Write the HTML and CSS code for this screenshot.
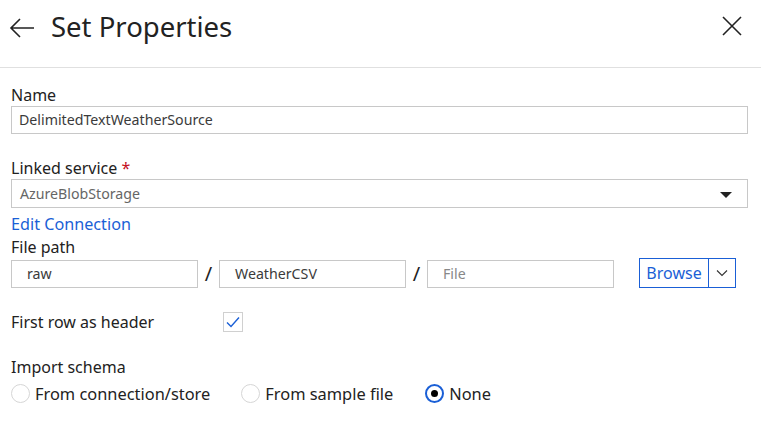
FILE: index.html
```html
<!DOCTYPE html>
<html>
<head>
<meta charset="utf-8">
<link rel="stylesheet" href="styles.css">
</head>
<body>
<div class="panel">
  <header class="head">
    <button class="back" aria-label="Back">
      <svg width="26" height="20" viewBox="0 0 26 20"><path d="M25 10H2M11 1L2 10l9 9" fill="none" stroke="#222" stroke-width="1.6"/></svg>
    </button>
    <h1 class="title">Set Properties</h1>
    <button class="close" aria-label="Close">
      <svg width="20" height="20" viewBox="0 0 20 20"><path d="M1 1l18 18M19 1L1 19" fill="none" stroke="#222" stroke-width="1.6"/></svg>
    </button>
  </header>
  <main class="body">
    <div class="field">
      <label class="label">Name</label>
      <div class="input">DelimitedTextWeatherSource</div>
    </div>
    <div class="field f-linked">
      <label class="label">Linked service <span class="req">*</span></label>
      <div class="input select"><span class="muted">AzureBlobStorage</span><span class="caret"></span></div>
      <a class="link">Edit Connection</a>
    </div>
    <div class="field">
      <label class="label">File path</label>
      <div class="path">
        <div class="input pi">raw</div>
        <span class="slash">/</span>
        <div class="input pi">WeatherCSV</div>
        <span class="slash">/</span>
        <div class="input pi placeholder">File</div>
        <div class="browse">
          <span class="browse-main">Browse</span>
          <span class="browse-drop"><svg width="12" height="8" viewBox="0 0 12 8"><path d="M1 1.5l5 5 5-5" fill="none" stroke="#333" stroke-width="1.1"/></svg></span>
        </div>
      </div>
    </div>
    <div class="row-check">
      <span class="check-label">First row as header</span>
      <span class="checkbox"><svg width="14" height="12" viewBox="0 0 14 12"><path d="M1 6.5l4 4L13 1.5" fill="none" stroke="#1a5fd6" stroke-width="1.4"/></svg></span>
    </div>
    <div class="field f-schema">
      <label class="label">Import schema</label>
      <div class="radios">
        <span class="radio"><span class="circle"></span>From connection/store</span>
        <span class="radio"><span class="circle"></span>From sample file</span>
        <span class="radio"><span class="circle on"></span>None</span>
      </div>
    </div>
  </main>
</div>
</body>
</html>
```
FILE: styles.css
```css
* { box-sizing: border-box; }
html, body { margin: 0; padding: 0; background: #fff; }
body { font-family: "Segoe UI", "Noto Sans", "Open Sans", sans-serif; color: #222; width: 761px; height: 436px; overflow: hidden; }
button { background: none; border: 0; padding: 0; cursor: pointer; display: flex; }

.head { display: flex; align-items: center; height: 68px; border-bottom: 1px solid #e0e0e0; padding: 0 19px 13px 9px; }
.back { margin-right: 16px; margin-top: 1px; }
.title { flex: 1; margin: 0; font-size: 27.5px; font-weight: 400; color: #222; line-height: 34px; }
.close { margin-top: -3px; }

.body { padding: 17px 13px 0 11px; }
.field { display: flex; flex-direction: column; }
.label { font-size: 16px; line-height: 20px; height: 21px; color: #222; }
.req { color: #c50f1f; }
.input { height: 28px; border: 1px solid #c8c8c8; font-size: 14.2px; line-height: 26px; padding: 0 7px; color: #3b3b3b; }
.f-linked { margin-top: 24px; }
.select { display: flex; justify-content: space-between; align-items: center; padding-left: 8px; padding-right: 15px; height: 29px; }
.muted { color: #666; }
.caret { width: 0; height: 0; border-left: 6px solid transparent; border-right: 6px solid transparent; border-top: 6px solid #222; margin-top: 3px; }
.link { color: #1a5fd6; font-size: 16.2px; line-height: 20px; margin-top: 6px; height: 23px; }

.path { display: flex; align-items: center; margin-top: 2px; }
.pi { width: 187px; padding-left: 15px; }
.slash { width: 21px; text-align: center; font-size: 20px; color: #222; line-height: 28px; }
.placeholder { color: #888; }
.browse { display: flex; height: 30px; border: 1px solid #1a5fd6; margin-left: 25px; margin-top: -2px; }
.browse-main { color: #1a5fd6; font-size: 16px; line-height: 28px; border-right: 1px solid #1a5fd6; width: 69px; text-align: center; }
.browse-drop { width: 26px; display: flex; align-items: center; justify-content: center; }

.row-check { display: flex; align-items: center; margin-top: 24px; height: 20px; }
.check-label { font-size: 16px; width: 212px; }
.checkbox { width: 20px; height: 20px; border: 1px solid #d0d0d0; display: flex; align-items: center; justify-content: center; }

.f-schema { margin-top: 25px; }
.radios { display: flex; align-items: center; margin-top: 4px; }
.radio { display: flex; align-items: center; font-size: 16.4px; color: #222; margin-right: 31px; }
.radio:nth-child(2) { margin-right: 32px; }
.circle { width: 19px; height: 19px; border-radius: 50%; border: 1px solid #d6d6d6; margin-right: 5px; }
.circle.on { border: 2px solid #1a5fd6; display: flex; align-items: center; justify-content: center; }
.circle.on::after { content: ""; width: 7px; height: 7px; border-radius: 50%; background: #000; }
```
